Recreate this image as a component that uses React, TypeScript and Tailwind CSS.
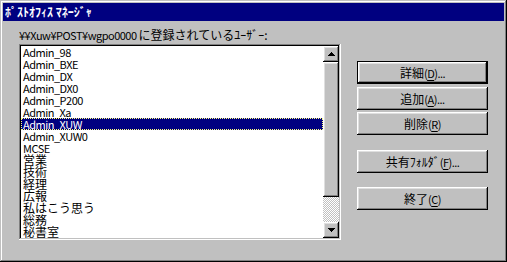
const USERS = [
  'Admin_98',
  'Admin_BXE',
  'Admin_DX',
  'Admin_DX0',
  'Admin_P200',
  'Admin_Xa',
  'Admin_XUW',
  'Admin_XUW0',
  'MCSE',
  '営業',
  '技術',
  '経理',
  '広報',
  '私はこう思う',
  '総務',
  '秘書室',
]

const SELECTED = 'Admin_XUW'

// latin glyphs of the old bitmap UI font are narrow, so squeeze them a bit
const latin = 'text-[11px] tracking-[-0.5px]'
const isLatin = (s: string) => /^[\x20-\x7e]+$/.test(s)

const raised =
  'shadow-[inset_-1px_-1px_#000,inset_1px_1px_#fff,inset_-2px_-2px_#808080,inset_2px_2px_#dfdfdf]'

function Arrow({ down }: { down?: boolean }) {
  return (
    <svg width="7" height="4" viewBox="0 0 7 4" className={down ? 'rotate-180' : ''}>
      <path d="M3 0h1v1h1v1h1v1h1v1H0V3h1V2h1V1h1z" fill="#000" />
    </svg>
  )
}

function Button({
  label,
  mnemonic,
  tail = '',
  isDefault,
  className = '',
}: {
  label: string
  mnemonic: string
  tail?: string
  isDefault?: boolean
  className?: string
}) {
  return (
    <button
      type="button"
      className={`flex h-[23px] w-[131px] items-center justify-center bg-[#c0c0c0] text-[12px] leading-[12px] text-black ${className} ${
        isDefault ? 'border border-black' : ''
      }`}
    >
      <span className={`flex h-full w-full items-center justify-center ${raised}`}>
        {label}
        <span className={latin}>
          (<span className="underline underline-offset-2">{mnemonic}</span>){tail}
        </span>
      </span>
    </button>
  )
}

export default function App() {
  return (
    <div
      className="h-[262px] w-[507px] bg-[#c0c0c0] p-px text-black shadow-[inset_-1px_-1px_#000,inset_1px_1px_#c0c0c0]"
      style={{ fontFamily: "'Noto Sans CJK JP', sans-serif" }}
    >
      <div className="h-full w-full p-[2px] shadow-[inset_-1px_-1px_#808080,inset_1px_1px_#fff]">
        <div className="flex h-[18px] items-center bg-[#000080] pl-[2px] text-[12px] font-bold leading-[12px] text-white">
          ﾎﾟｽﾄｵﾌｨｽ ﾏﾈｰｼﾞｬ
        </div>

        <div className="flex pl-[16px] pt-[8px]">
          <div className="flex w-[322px] flex-col">
            <div className="h-[12px] whitespace-nowrap text-[12px] leading-[12px]">
              <span className={latin}>¥¥Xuw¥POST¥wgpo0000 </span>に登録されているﾕｰｻﾞｰ:
            </div>
            <div className="mt-[3px] h-[196px] p-px shadow-[inset_-1px_-1px_#fff,inset_1px_1px_#808080]">
              <div className="flex h-full p-px shadow-[inset_-1px_-1px_#c0c0c0,inset_1px_1px_#000]">
                <div className="flex-1 bg-white">
                  {USERS.map((u) => (
                    <div
                      key={u}
                      className={`h-[12px] whitespace-nowrap pl-[2px] text-[12px] leading-[12px] ${
                        u === SELECTED
                          ? 'bg-[#000080] text-white outline outline-1 outline-dotted outline-[#ffff80] -outline-offset-1'
                          : ''
                      }`}
                    >
                      <span className={isLatin(u) ? latin : ''}>{u}</span>
                    </div>
                  ))}
                </div>
                <div className="flex w-[16px] flex-col bg-[#c0c0c0]">
                  <div className={`flex h-[16px] items-center justify-center ${raised}`}>
                    <Arrow />
                  </div>
                  <div className={`h-[135px] bg-[#c0c0c0] ${raised}`} />
                  <div className="flex-1 bg-[repeating-conic-gradient(#c0c0c0_0_25%,#fff_0_50%)] bg-[length:2px_2px]" />
                  <div className={`flex h-[16px] items-center justify-center ${raised}`}>
                    <Arrow down />
                  </div>
                </div>
              </div>
            </div>
          </div>

          <div className="ml-[16px] flex flex-col pt-[32px]">
            <Button label="詳細" mnemonic="D" tail="..." isDefault />
            <Button label="追加" mnemonic="A" tail="..." className="mt-[3px]" />
            <Button label="削除" mnemonic="R" className="mt-[2px]" />
            <Button label="共有ﾌｫﾙﾀﾞ" mnemonic="F" tail="..." className="mt-[15px]" />
            <Button label="終了" mnemonic="C" className="mt-[14px]" />
          </div>
        </div>
      </div>
    </div>
  )
}
